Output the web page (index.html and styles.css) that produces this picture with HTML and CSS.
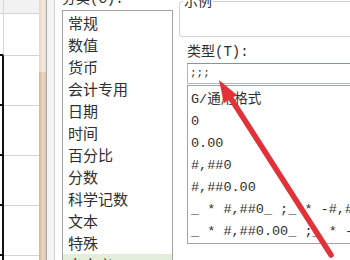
FILE: index.html
```html
<!DOCTYPE html>
<html lang="zh-CN">
<head>
    <meta charset="UTF-8" />
    <title>设置单元格格式 - 自定义</title>
    <link rel="stylesheet" href="styles.css">
</head>
<body>
    <div class="screen">
        <div class="sheet">
            <div class="sheet-row head"><div class="col-a"></div><div class="col-b"></div></div>
            <div class="sheet-row first"><div class="col-a"></div><div class="col-b"></div></div>
            <div class="sheet-row boxed"><div class="col-a"></div><div class="col-b"></div></div>
            <div class="sheet-row boxed"><div class="col-a"></div><div class="col-b"></div></div>
            <div class="sheet-row boxed"><div class="col-a"></div><div class="col-b"></div></div>
            <div class="sheet-row boxed"><div class="col-a"></div><div class="col-b"></div></div>
            <div class="sheet-row boxed"><div class="col-a"></div><div class="col-b"></div></div>
        </div>
        <div class="edge"></div>
        <div class="frame"></div>

        <div class="dialog">
            <div class="category">
                <div class="label">分类(C):</div>
                <ul class="category-list">
                    <li>常规</li>
                    <li>数值</li>
                    <li>货币</li>
                    <li>会计专用</li>
                    <li>日期</li>
                    <li>时间</li>
                    <li>百分比</li>
                    <li>分数</li>
                    <li>科学记数</li>
                    <li>文本</li>
                    <li>特殊</li>
                    <li class="selected">自定义</li>
                </ul>
            </div>

            <div class="detail">
                <div class="sample">
                    <span class="sample-title">示例</span>
                </div>
                <div class="type-area">
                    <div class="label">类型(T):</div>
                    <div class="type-input">;;;</div>
                    <ul class="format-list">
                        <li>G/通用格式</li>
                        <li>0</li>
                        <li>0.00</li>
                        <li>#,##0</li>
                        <li>#,##0.00</li>
                        <li>_ * #,##0_ ;_ * -#,##0_ ;_ * "-"_ ;_ @_ </li>
                        <li>_ * #,##0.00_ ;_ * -#,##0.00_ ;_ * "-"??_ ;_ @_ </li>
                    </ul>
                </div>
            </div>
        </div>

        <!-- red pointer drawn over the screenshot -->
        <svg class="arrow" width="350" height="260" viewBox="0 0 350 260">
            <line x1="331" y1="255" x2="228" y2="94" stroke="#e3313a" stroke-width="5.5" stroke-linecap="round" />
            <polygon points="219,80 237,95 224,103" fill="#e3313a" />
        </svg>
    </div>
</body>
</html>
```

FILE: styles.css
```css
* {
    box-sizing: border-box;
}
body {
    margin: 0;
    background-color: #fff;
    font-family: "Noto Sans CJK SC", sans-serif;
    color: #2e2e2e;
}
.screen {
    position: relative;
    display: flex;
    width: 350px;
    height: 260px;
    overflow: hidden;
}

/* spreadsheet behind the dialog */
.sheet {
    flex: none;
    width: 39px;
}
.sheet-row {
    display: flex;
    height: 50px;
}
.sheet-row.head {
    height: 14px;
    background-color: #f2f2f2;
}
.sheet-row.first {
    height: 42px;
}
.col-a {
    width: 4px;
    border-right: 1px solid #d8d8d8;
    border-bottom: 1px solid #d8d8d8;
}
.col-b {
    flex: 1;
    border-bottom: 1px solid #d4d4d4;
}
.first .col-a {
    border-bottom: 2px solid #111;
}
.boxed .col-a {
    border-right: 2px solid #111;
    border-bottom: 2px solid #111;
}

/* dialog frame */
.edge {
    flex: none;
    width: 7px;
    background:
        linear-gradient(to bottom, rgba(255, 255, 255, 0.45) 0 72px, transparent 72px),
        linear-gradient(to right, #d6b594, #ecd7c2 55%, #dfc3a6);
}
.frame {
    flex: none;
    width: 9px;
    border-left: 1px solid #a9a9a9;
    border-right: 1px solid #d0d0d0;
    background-color: #f4f4f4;
}
.dialog {
    flex: none;
    display: flex;
    width: 320px;
    padding-left: 7px;
}
.label {
    font-family: "Liberation Mono", "Noto Sans CJK SC", monospace;
    font-size: 14px;
    line-height: 20px;
    white-space: nowrap;
}

/* category list */
.category {
    flex: none;
    width: 111px;
}
.category .label {
    margin-top: -11px;
    margin-bottom: 1px;
}
.category-list {
    list-style: none;
    margin: 0;
    padding: 1px 0 0;
    height: 300px;
    border: 1px solid #a3a3a3;
}
.category-list li {
    font-size: 15px;
    line-height: 22px;
    padding-left: 5px;
}
.category-list .selected {
    background-color: #e2eeda;
}

/* right side */
.detail {
    flex: none;
    width: 200px;
    margin-left: 6px;
}
.sample {
    height: 36px;
    margin-top: 1px;
    padding-left: 3px;
    border: 1px solid #d2d2d2;
    border-radius: 3px;
}
.sample-title {
    display: block;
    width: fit-content;
    margin-top: -12px;
    padding: 0 1px;
    background-color: #fff;
    font-size: 14px;
    line-height: 20px;
}
.type-area {
    padding-left: 8px;
}
.type-area .label {
    margin-top: 5px;
}
.type-input {
    height: 21px;
    margin-top: 1px;
    padding-left: 2px;
    border: 1px solid #a9b9c8;
    border-top-color: #8094a8;
    font-family: "Liberation Mono", monospace;
    font-size: 11px;
    line-height: 19px;
}
.format-list {
    list-style: none;
    margin: 1px 0 0;
    padding: 3px 0 0 3px;
    height: 159px;
    border: 1px solid #a3a3a3;
    font-family: "Liberation Mono", "Noto Sans CJK SC", monospace;
    font-size: 13.5px;
    white-space: nowrap;
    overflow: hidden;
}
.format-list li {
    line-height: 22px;
}

.arrow {
    position: absolute;
    left: 0;
    top: 0;
    pointer-events: none;
}
```
